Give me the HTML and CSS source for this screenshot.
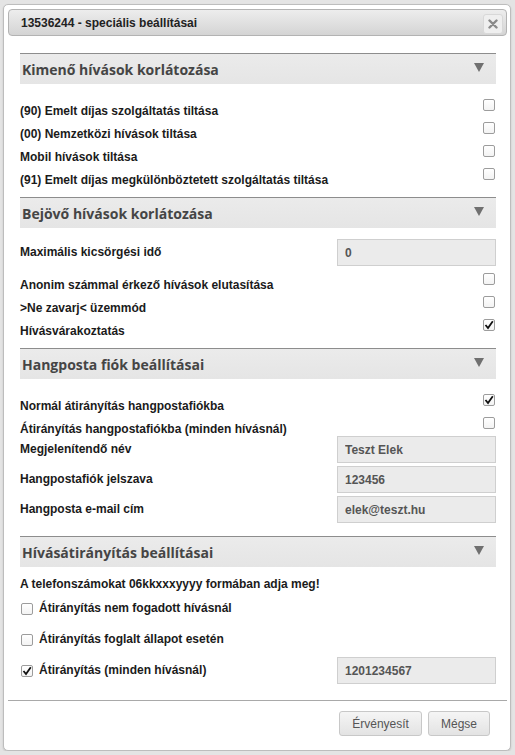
FILE: index.html
```html
<!DOCTYPE html>
<html lang="hu">
<head>
  <meta charset="UTF-8" />
  <meta name="viewport" content="width=device-width, initial-scale=1.0" />
  <title>13536244 - speciális beállításai</title>
  <link rel="stylesheet" href="styles.css">
</head>
<body>
  <div class="dialog">
    <div class="titlebar">
      <span class="title">13536244 - speciális beállításai</span>
      <button class="close" title="Bezárás">
        <svg width="10" height="10" viewBox="0 0 10 10"><path d="M1.5 1.5 L8.5 8.5 M8.5 1.5 L1.5 8.5" stroke="#8a8a8a" stroke-width="2.4" stroke-linecap="round"/></svg>
      </button>
    </div>

    <div class="content">
      <!-- kimenő -->
      <div class="sec-head">
        <span>Kimenő hívások korlátozása</span>
        <svg class="arrow" width="10" height="9" viewBox="0 0 10 9"><polygon points="0,0 10,0 5,9" fill="#707070"/></svg>
      </div>
      <div class="sec-body">
        <div class="check-row"><span class="label">(90) Emelt díjas szolgáltatás tiltása</span><span class="cb"></span></div>
        <div class="check-row"><span class="label">(00) Nemzetközi hívások tiltása</span><span class="cb"></span></div>
        <div class="check-row"><span class="label">Mobil hívások tiltása</span><span class="cb"></span></div>
        <div class="check-row"><span class="label">(91) Emelt díjas megkülönböztetett szolgáltatás tiltása</span><span class="cb"></span></div>
      </div>

      <!-- bejövő -->
      <div class="sec-head">
        <span>Bejövő hívások korlátozása</span>
        <svg class="arrow" width="10" height="9" viewBox="0 0 10 9"><polygon points="0,0 10,0 5,9" fill="#707070"/></svg>
      </div>
      <div class="sec-body sec-body-tight">
        <div class="field-row spaced"><span class="label">Maximális kicsörgési idő</span><input class="field" value="0" readonly></div>
        <div class="check-row"><span class="label">Anonim számmal érkező hívások elutasítása</span><span class="cb"></span></div>
        <div class="check-row"><span class="label">&gt;Ne zavarj&lt; üzemmód</span><span class="cb"></span></div>
        <div class="check-row"><span class="label">Hívásvárakoztatás</span><span class="cb checked"><svg width="10" height="10" viewBox="0 0 10 10"><path d="M1.5 5 L4 8 L8.8 1.2" fill="none" stroke="#111" stroke-width="1.8"/></svg></span></div>
      </div>

      <!-- hangposta -->
      <div class="sec-head">
        <span>Hangposta fiók beállításai</span>
        <svg class="arrow" width="10" height="9" viewBox="0 0 10 9"><polygon points="0,0 10,0 5,9" fill="#707070"/></svg>
      </div>
      <div class="sec-body sec-body-loose">
        <div class="check-row"><span class="label">Normál átirányítás hangpostafiókba</span><span class="cb checked"><svg width="10" height="10" viewBox="0 0 10 10"><path d="M1.5 5 L4 8 L8.8 1.2" fill="none" stroke="#111" stroke-width="1.8"/></svg></span></div>
        <div class="check-row"><span class="label">Átirányítás hangpostafiókba (minden hívásnál)</span><span class="cb"></span></div>
        <div class="field-row snug"><span class="label">Megjelenítendő név</span><input class="field" value="Teszt Elek" readonly></div>
        <div class="field-row"><span class="label">Hangpostafiók jelszava</span><input class="field" value="123456" readonly></div>
        <div class="field-row"><span class="label">Hangposta e-mail cím</span><input class="field" value="elek@teszt.hu" readonly></div>
      </div>

      <!-- átirányítás -->
      <div class="sec-head">
        <span>Hívásátirányítás beállításai</span>
        <svg class="arrow" width="10" height="9" viewBox="0 0 10 9"><polygon points="0,0 10,0 5,9" fill="#707070"/></svg>
      </div>
      <div class="sec-body sec-body-last">
        <p class="note">A telefonszámokat 06kkxxxyyyy formában adja meg!</p>
        <div class="opt-row"><span class="cb"></span><span class="label">Átirányítás nem fogadott hívásnál</span></div>
        <div class="opt-row"><span class="cb"></span><span class="label">Átirányítás foglalt állapot esetén</span></div>
        <div class="opt-row">
          <span class="cb checked"><svg width="10" height="10" viewBox="0 0 10 10"><path d="M1.5 5 L4 8 L8.8 1.2" fill="none" stroke="#111" stroke-width="1.8"/></svg></span>
          <span class="label">Átirányítás (minden hívásnál)</span>
          <input class="field" value="1201234567" readonly>
        </div>
      </div>
    </div>

    <div class="footer">
      <button class="btn">Érvényesít</button>
      <button class="btn">Mégse</button>
    </div>
  </div>
</body>
</html>
```

FILE: styles.css
```css
* {
  margin: 0;
  padding: 0;
  box-sizing: border-box;
}

body {
  background: #e4e4e4;
  font-family: "Liberation Sans", Arial, sans-serif;
  font-size: 12px;
  color: #1b1b1b;
}

.dialog {
  width: 508px;
  margin: 4px 0 0 3px;
  padding: 4px 3px 14px 4px;
  background: #fff;
  border: 1px solid #bdbdbd;
  border-radius: 5px;
  box-shadow: 0 1px 2px rgba(0, 0, 0, 0.15);
}

.titlebar {
  height: 27px;
  display: flex;
  align-items: center;
  justify-content: space-between;
  padding: 0 3px 0 12px;
  border: 1px solid #b3b3b3;
  border-radius: 4px;
  background: linear-gradient(#ededed, #d4d4d4);
}

.title {
  font-weight: bold;
  font-size: 12px;
  color: #222;
}

.close {
  width: 20px;
  height: 20px;
  margin-top: 2px;
  display: flex;
  align-items: center;
  justify-content: center;
  border: 1px solid #d8d8d8;
  border-radius: 3px;
  background: #efefef;
}

.content {
  padding: 17px 11px 16px 12px;
}

.sec-head {
  height: 31px;
  display: flex;
  align-items: center;
  justify-content: space-between;
  padding: 0 12px 0 2px;
  border-top: 1px solid #8d8d8d;
  background: linear-gradient(#ebebeb, #e5e5e5);
  font-family: "Open Sans", "Liberation Sans", sans-serif;
  font-weight: bold;
  font-size: 14px;
  color: #454545;
}

.arrow {
  margin-top: -4px;
}

.sec-body {
  display: flex;
  flex-direction: column;
  gap: 3px;
  padding: 15px 0 9px;
}

.sec-body-tight {
  padding-top: 11px;
}

.sec-body-loose {
  padding-bottom: 13px;
}

.sec-body-last {
  padding: 10px 0 0;
  gap: 4px;
}

.label {
  font-weight: bold;
  line-height: 15px;
}

.check-row {
  height: 20px;
  display: flex;
  align-items: flex-start;
  justify-content: space-between;
}

.check-row .label {
  padding-top: 5px;
}

.check-row .cb {
  margin-right: 1px;
}

.field-row {
  height: 27px;
  display: flex;
  align-items: center;
  justify-content: space-between;
}

.field-row.spaced {
  margin-bottom: 4px;
}

.field-row.snug {
  margin-top: -4px;
}

.field {
  width: 159px;
  height: 27px;
  padding: 0 7px;
  border: 1px solid #cfcfcf;
  background: #ebebeb;
  font-family: "Liberation Sans", Arial, sans-serif;
  font-weight: bold;
  font-size: 12px;
  color: #555;
  outline: none;
}

.cb {
  width: 12px;
  height: 12px;
  flex: none;
  display: flex;
  align-items: center;
  justify-content: center;
  border: 1px solid #9c9c9c;
  border-radius: 2px;
  background: linear-gradient(#fff, #f3f3f3);
}

.note {
  font-weight: bold;
  line-height: 15px;
  margin-bottom: -1px;
}

.opt-row {
  height: 27px;
  display: flex;
  align-items: center;
  gap: 6px;
}

.opt-row .cb {
  margin-left: 1px;
}

.opt-row .field {
  margin-left: auto;
}

.footer {
  display: flex;
  justify-content: flex-end;
  gap: 6px;
  padding: 10px 17px 0 0;
  border-top: 1px solid #a9a9a9;
}

.btn {
  height: 25px;
  padding: 0 12px;
  border: 1px solid #c8c8c8;
  border-radius: 3px;
  background: linear-gradient(#f5f5f5, #e3e3e3);
  font-family: "Liberation Sans", Arial, sans-serif;
  font-size: 12px;
  color: #555;
}
```
